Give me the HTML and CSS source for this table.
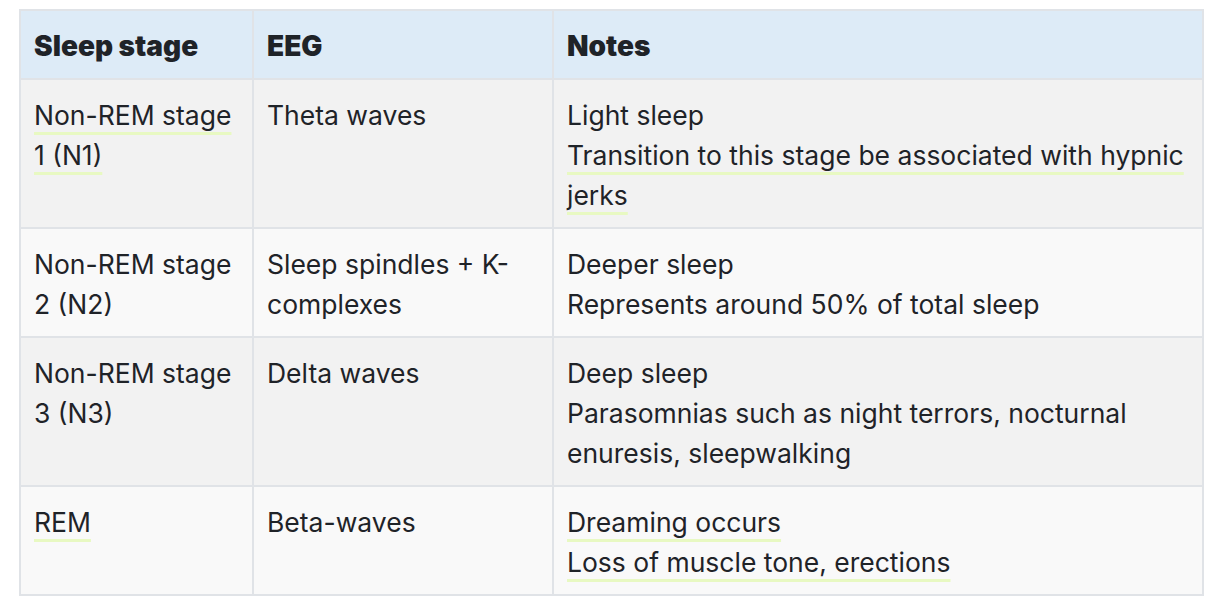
FILE: index.html
```html
<!DOCTYPE html>
<html>
<head>
<meta charset="utf-8">
<link rel="stylesheet" href="styles.css">
</head>
<body>
<table class="stages">
  <colgroup>
    <col class="c1"><col class="c2"><col class="c3">
  </colgroup>
  <thead>
    <tr><th>Sleep stage</th><th>EEG</th><th>Notes</th></tr>
  </thead>
  <tbody>
    <tr class="odd">
      <td><span class="ul">Non-REM stage 1 (N1)</span></td>
      <td>Theta waves</td>
      <td><div>Light sleep</div><div><span class="ul">Transition to this stage be associated with hypnic jerks</span></div></td>
    </tr>
    <tr class="even">
      <td>Non-REM stage 2 (N2)</td>
      <td>Sleep spindles + K-complexes</td>
      <td><div>Deeper sleep</div><div>Represents around 50% of total sleep</div></td>
    </tr>
    <tr class="odd">
      <td>Non-REM stage 3 (N3)</td>
      <td>Delta waves</td>
      <td><div>Deep sleep</div><div>Parasomnias such as night terrors, nocturnal enuresis, sleepwalking</div></td>
    </tr>
    <tr class="even">
      <td><span class="ul">REM</span></td>
      <td>Beta-waves</td>
      <td><div><span class="ul">Dreaming occurs</span></div><div><span class="ul">Loss of muscle tone, erections</span></div></td>
    </tr>
  </tbody>
</table>
</body>
</html>
```
FILE: styles.css
```css
html, body {
  margin: 0;
  padding: 0;
  background: #ffffff;
}
body {
  padding: 9px 0 0 19px;
  font-family: Inter, "Liberation Sans", sans-serif;
  color: #1f2328;
}
.stages {
  border-collapse: collapse;
  table-layout: fixed;
  width: 1183px;
  font-size: 26.5px;
  line-height: 40px;
}
.c1 { width: 233px; }
.c2 { width: 300px; }
.c3 { width: 650px; }
.stages th, .stages td {
  border: 2px solid #e0e3e7;
  padding: 15px 13px 12px 13px;
  text-align: left;
  vertical-align: top;
}
.stages th {
  background: #ddebf7;
  font-weight: 900;
  font-size: 28px;
  padding-top: 15px;
  padding-bottom: 12px;
}
.odd td { background: #f2f2f2; }
.even td { background: #f9f9f9; }
.ul {
  text-decoration: underline;
  text-decoration-color: #e8f9c2;
  text-decoration-thickness: 3px;
  text-underline-offset: 7px;
  text-decoration-skip-ink: none;
}
```
